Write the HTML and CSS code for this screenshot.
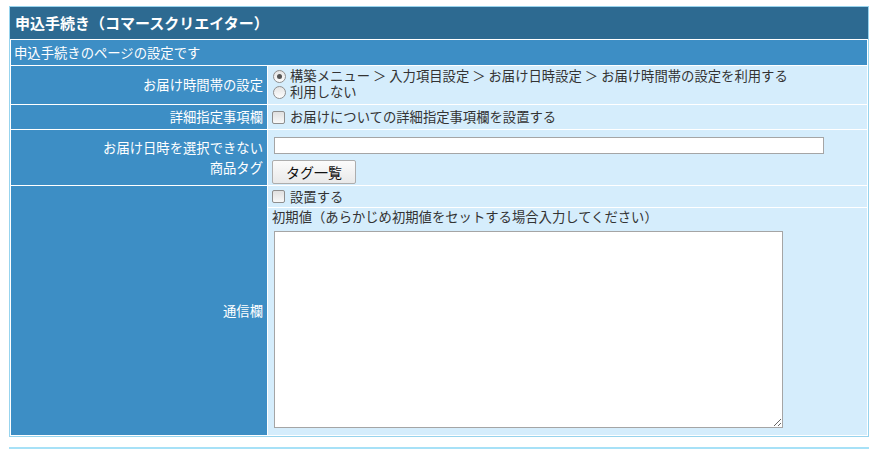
FILE: index.html
```html
<!DOCTYPE html>
<html lang="ja">
<head>
<meta charset="utf-8">
<title>申込手続き（コマースクリエイター）</title>
<link rel="stylesheet" href="styles.css">
</head>
<body>
<div class="panel">
  <div class="panel-title">申込手続き（コマースクリエイター）</div>
  <table class="form">
    <colgroup><col class="col-label"><col></colgroup>
    <tr><td colspan="2" class="desc">申込手続きのページの設定です</td></tr>
    <tr>
      <th>お届け時間帯の設定</th>
      <td class="val v-radio">
        <label class="opt"><span class="radio checked"></span>構築メニュー ＞ 入力項目設定 ＞ お届け日時設定 ＞ お届け時間帯の設定を利用する</label>
        <label class="opt"><span class="radio"></span>利用しない</label>
      </td>
    </tr>
    <tr>
      <th>詳細指定事項欄</th>
      <td class="val v-check">
        <label class="opt"><span class="check"></span>お届けについての詳細指定事項欄を設置する</label>
      </td>
    </tr>
    <tr>
      <th>お届け日時を選択できない<br>商品タグ</th>
      <td class="val v-tag">
        <input type="text" class="text-in">
        <button type="button" class="btn">タグ一覧</button>
      </td>
    </tr>
    <tr>
      <th>通信欄</th>
      <td class="val v-memo">
        <div class="sub1"><label class="opt"><span class="check"></span>設置する</label></div>
        <div class="sub2">
          <div class="hint">初期値（あらかじめ初期値をセットする場合入力してください）</div>
          <textarea class="memo"></textarea>
        </div>
      </td>
    </tr>
  </table>
</div>
<div class="rule"></div>
</body>
</html>
```
FILE: styles.css
```css
html, body {
  margin: 0;
  padding: 0;
  background: #fff;
}
body {
  font-family: "Noto Sans CJK JP", "Noto Sans", sans-serif;
  font-size: 13.33px;
  color: #333;
}
.panel {
  margin: 6px 0 0 9px;
  width: 860px;
  box-sizing: border-box;
  border: 1px solid #98d4ee;
}
.panel-title {
  height: 32px;
  line-height: 32px;
  padding-left: 5px;
  background: #2d6a91;
  color: #fff;
  font-weight: bold;
  font-size: 15px;
}
.form {
  width: 100%;
  table-layout: fixed;
  border-collapse: separate;
  border-spacing: 1px;
  background: #fff;
}
.col-label { width: 256px; }
.form th, .form td {
  padding: 0;
}
.desc {
  background: #3d8ec5;
  color: #fff;
  height: 25px;
  line-height: 25px;
  padding: 0 3px !important;
}
.form th {
  background: #3d8ec5;
  color: #fff;
  font-weight: normal;
  text-align: right;
  vertical-align: middle;
  line-height: 20px;
  padding: 0 4px 0 0;
}
.val {
  background: #d5edfc;
  vertical-align: top;
}
.opt {
  display: flex;
  align-items: center;
  white-space: nowrap;
}
.radio {
  width: 13px;
  height: 13px;
  box-sizing: border-box;
  border: 1px solid #8e8e8e;
  border-radius: 50%;
  background: linear-gradient(#e4e4e4, #fdfdfd);
  margin: 0 4px 0 5px;
  position: relative;
  flex: none;
}
.radio.checked::after {
  content: "";
  position: absolute;
  left: 3px;
  top: 3px;
  width: 5px;
  height: 5px;
  border-radius: 50%;
  background: #555;
}
.check {
  width: 13px;
  height: 13px;
  box-sizing: border-box;
  border: 1px solid #8e8e8e;
  border-radius: 2px;
  background: linear-gradient(#e0e0e0, #f8f8f8);
  margin: 0 5px 0 4px;
  flex: none;
}
.v-radio {
  padding: 2px 0 4px 0 !important;
}
.v-radio .opt {
  height: 16px;
  line-height: 16px;
}
.v-check {
  padding: 3px 0 !important;
}
.v-check .opt {
  height: 18px;
  line-height: 18px;
}
.v-tag {
  padding: 7px 0 1px 0 !important;
}
.text-in {
  display: block;
  margin: 0 0 0 6px;
  width: 550px;
  height: 17px;
  box-sizing: border-box;
  border: 1px solid #a5a5a5;
  background: #fff;
  padding: 0 2px;
  font: inherit;
}
.btn {
  display: block;
  margin: 6px 0 0 4px;
  width: 84px;
  height: 24px;
  box-sizing: border-box;
  border: 1px solid #adadad;
  border-radius: 2px;
  background: linear-gradient(#fbfbfb, #e9e9e9);
  color: #111;
  font-family: inherit;
  font-size: 14px;
  padding: 0;
}
.sub1 {
  height: 21px;
  line-height: 18px;
  display: flex;
  align-items: center;
  border-bottom: 1px solid #fff;
}
.sub2 {
  padding: 0 0 7px 4px;
}
.hint {
  line-height: 18px;
  height: 18px;
}
.memo {
  display: block;
  margin: 5px 0 0 2px;
  width: 509px;
  height: 197px;
  box-sizing: border-box;
  border: 1px solid #a5a5a5;
  background: #fff;
  font: inherit;
}
.rule {
  margin: 10px 0 0 9px;
  width: 860px;
  height: 2px;
  background: #a7e1f7;
}
```
